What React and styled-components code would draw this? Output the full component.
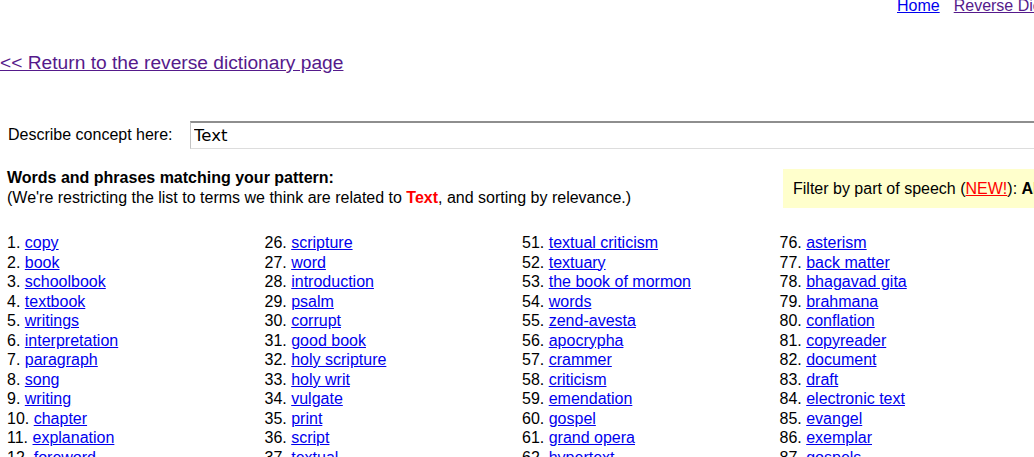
import React from 'react';
import styled, { createGlobalStyle } from 'styled-components';

const GlobalStyle = createGlobalStyle`
  html, body {
    margin: 0;
    padding: 0;
    background: #fff;
    overflow: hidden;
  }
  body {
    font-family: 'Liberation Sans', Arial, Helvetica, sans-serif;
    font-size: 16px;
    color: #000;
  }
`;

const Page = styled.div`
  width: 1034px;
  height: 457px;
  overflow: hidden;
`;

const TopNav = styled.nav`
  display: flex;
  gap: 14px;
  padding-left: 897px;
  margin-top: -3px;
  height: 20px;
  white-space: nowrap;
  font-size: 16px;
`;

const NavLink = styled.a`
  color: ${(p) => (p.$visited ? '#551a8b' : '#0000ee')};
  text-decoration: underline;
`;

const BackLink = styled.a`
  display: block;
  margin-top: 34px;
  font-size: 19.2px;
  line-height: 24px;
  color: #551a8b;
  text-decoration: underline;
  width: max-content;
`;

const SearchRow = styled.div`
  display: flex;
  align-items: center;
  margin-top: 46px;
  padding-left: 8px;
  white-space: nowrap;
`;

const Label = styled.label`
  width: 182px;
  flex-shrink: 0;
  font-size: 16px;
`;

const ConceptInput = styled.input`
  width: 1000px;
  height: 28px;
  box-sizing: border-box;
  flex-shrink: 0;
  padding: 0 3px;
  font-family: 'DejaVu Sans', Verdana, sans-serif;
  font-size: 16.5px;
  color: #000;
  border: 1px solid #ddd;
  border-top: 2px solid #8e8e8e;
  border-left: 1px solid #c4c4c4;
  background: #fff;
  outline: none;
`;

const ResultsHead = styled.div`
  display: flex;
  justify-content: space-between;
  align-items: center;
  margin-top: 19px;
  padding-left: 7px;
`;

const HeadText = styled.div`
  line-height: 20px;
  white-space: nowrap;
`;

const Bold = styled.div`
  font-weight: bold;
`;

const Hit = styled.span`
  color: #ff0000;
  font-weight: bold;
`;

const FilterBox = styled.div`
  flex-shrink: 0;
  width: 251px;
  height: 39px;
  box-sizing: border-box;
  padding-left: 10px;
  display: flex;
  align-items: center;
  margin-top: 1px;
  background: #ffffcc;
  white-space: nowrap;
  overflow: hidden;
`;

const NewLink = styled.a`
  color: #ff0000;
  text-decoration: underline;
`;

const List = styled.div`
  display: grid;
  grid-template-columns: repeat(4, 257.5px);
  margin-top: 25px;
  padding-left: 7px;
`;

const Column = styled.div`
  display: flex;
  flex-direction: column;
`;

const Item = styled.div`
  line-height: 19.5px;
  white-space: nowrap;
`;

const WordLink = styled.a`
  color: #0000ee;
  text-decoration: underline;
`;

const columns = [
  ['copy', 'book', 'schoolbook', 'textbook', 'writings', 'interpretation', 'paragraph', 'song', 'writing', 'chapter', 'explanation', 'foreword'],
  ['scripture', 'word', 'introduction', 'psalm', 'corrupt', 'good book', 'holy scripture', 'holy writ', 'vulgate', 'print', 'script', 'textual'],
  ['textual criticism', 'textuary', 'the book of mormon', 'words', 'zend-avesta', 'apocrypha', 'crammer', 'criticism', 'emendation', 'gospel', 'grand opera', 'hypertext'],
  ['asterism', 'back matter', 'bhagavad gita', 'brahmana', 'conflation', 'copyreader', 'document', 'draft', 'electronic text', 'evangel', 'exemplar', 'gospels'],
];

const App = () => (
  <Page>
    <GlobalStyle />
    <TopNav>
      <NavLink href="#">Home</NavLink>
      <NavLink href="#" $visited>Reverse Dictionary</NavLink>
    </TopNav>

    <BackLink href="#">&lt;&lt; Return to the reverse dictionary page</BackLink>

    <SearchRow>
      <Label>Describe concept here:</Label>
      <ConceptInput defaultValue="Text" />
    </SearchRow>

    <ResultsHead>
      <HeadText>
        <Bold>Words and phrases matching your pattern:</Bold>
        (We're restricting the list to terms we think are related to <Hit>Text</Hit>, and sorting by relevance.)
      </HeadText>
      <FilterBox>
        Filter by part of speech (<NewLink href="#">NEW!</NewLink>):&nbsp;<b>All</b>
      </FilterBox>
    </ResultsHead>

    <List>
      {columns.map((words, c) => (
        <Column key={c}>
          {words.map((w, i) => {
            const n = c * 25 + i + 1;
            return (
              <Item key={w}>
                {n}.{n >= 10 && n < 26 ? '\u00a0' : ' '}
                <WordLink href="#">{w}</WordLink>
              </Item>
            );
          })}
        </Column>
      ))}
    </List>
  </Page>
);

export default App;
